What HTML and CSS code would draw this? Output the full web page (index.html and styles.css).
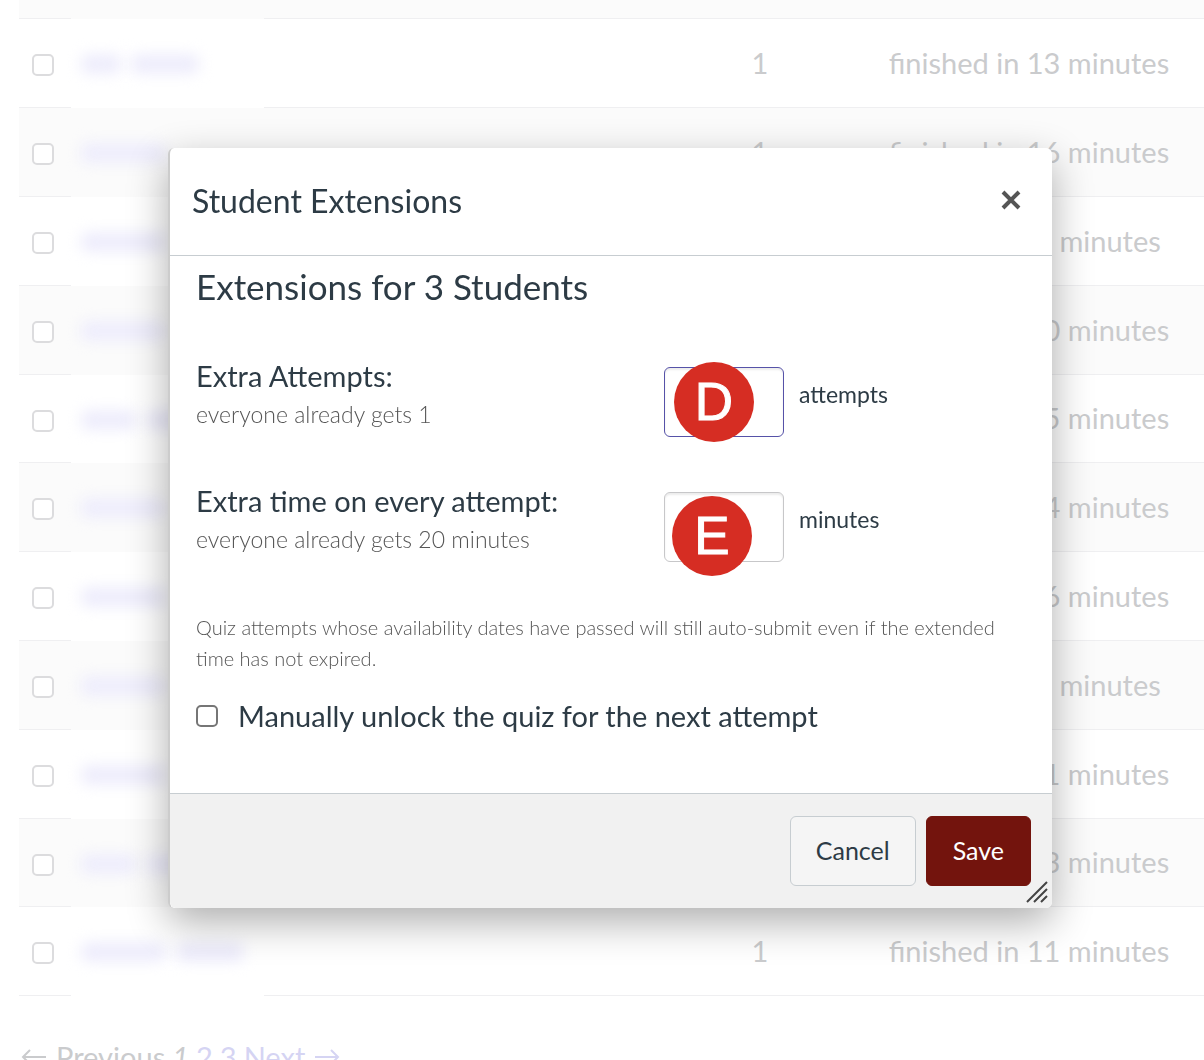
FILE: index.html
```html
<!DOCTYPE html>
<html lang="en">
<head>
<meta charset="utf-8">
<title>Student Extensions</title>
<link rel="stylesheet" href="styles.css">
</head>
<body>
<main class="page">
  <table class="students">
    <colgroup><col class="col-check"><col class="col-name"><col><col class="col-attempt"><col class="col-status"></colgroup>
    <tbody>
      <tr class="partial"><td></td><td></td><td></td><td></td><td></td></tr>
      <tr><td><input class="check" type="checkbox" aria-label="Select student"></td><td class="name"><i class="w40"></i><i class="w70"></i></td><td></td><td>1</td><td>finished in 13 minutes</td></tr>
      <tr><td><input class="check" type="checkbox" aria-label="Select student"></td><td class="name"><i class="w85"></i></td><td></td><td>1</td><td>finished in 16 minutes</td></tr>
      <tr><td><input class="check" type="checkbox" aria-label="Select student"></td><td class="name"><i class="w85"></i></td><td></td><td>1</td><td>finished in 9 minutes</td></tr>
      <tr><td><input class="check" type="checkbox" aria-label="Select student"></td><td class="name"><i class="w85"></i></td><td></td><td>1</td><td>finished in 10 minutes</td></tr>
      <tr><td><input class="check" type="checkbox" aria-label="Select student"></td><td class="name"><i class="w55"></i><i class="w40"></i></td><td></td><td>1</td><td>finished in 15 minutes</td></tr>
      <tr><td><input class="check" type="checkbox" aria-label="Select student"></td><td class="name"><i class="w85"></i></td><td></td><td>1</td><td>finished in 14 minutes</td></tr>
      <tr><td><input class="check" type="checkbox" aria-label="Select student"></td><td class="name"><i class="w85"></i></td><td></td><td>1</td><td>finished in 16 minutes</td></tr>
      <tr><td><input class="check" type="checkbox" aria-label="Select student"></td><td class="name"><i class="w85"></i></td><td></td><td>1</td><td>finished in 9 minutes</td></tr>
      <tr><td><input class="check" type="checkbox" aria-label="Select student"></td><td class="name"><i class="w85"></i></td><td></td><td>1</td><td>finished in 11 minutes</td></tr>
      <tr><td><input class="check" type="checkbox" aria-label="Select student"></td><td class="name"><i class="w55"></i><i class="w40"></i></td><td></td><td>1</td><td>finished in 13 minutes</td></tr>
      <tr><td><input class="check" type="checkbox" aria-label="Select student"></td><td class="name"><i class="w85"></i><i class="w70"></i></td><td></td><td>1</td><td>finished in 11 minutes</td></tr>
    </tbody>
  </table>
  <nav class="pages" aria-label="Pages">
    <span class="step"><svg class="arrow" viewBox="0 0 26 20" aria-hidden="true"><path d="M25 10H2M9 3L2 10l7 7"/></svg>Previous</span>
    <em>1</em>
    <a href="#">2</a>
    <a href="#">3</a>
    <a class="step" href="#">Next<svg class="arrow" viewBox="0 0 26 20" aria-hidden="true"><path d="M1 10h23M17 3l7 7-7 7"/></svg></a>
  </nav>
</main>

<div class="overlay">
  <form class="dialog" role="dialog" aria-labelledby="dialog-title">
    <header class="dialog-head">
      <h1 id="dialog-title">Student Extensions</h1>
      <button class="close" type="button" aria-label="Close"><svg viewBox="0 0 20 20" aria-hidden="true"><path d="M2 2l16 16M18 2L2 18"/></svg></button>
    </header>
    <div class="dialog-body">
      <h2>Extensions for 3 Students</h2>
      <div class="fields">
        <div class="field">
          <div class="caption"><label for="attempts">Extra Attempts:</label><p>everyone already gets 1</p></div>
          <div class="entry"><input class="box active" id="attempts" type="text"><span class="badge badge-d">D</span></div>
          <span class="unit">attempts</span>
        </div>
        <div class="field">
          <div class="caption"><label for="time">Extra time on every attempt:</label><p>everyone already gets 20 minutes</p></div>
          <div class="entry"><input class="box" id="time" type="text"><span class="badge badge-e">E</span></div>
          <span class="unit">minutes</span>
        </div>
      </div>
      <p class="note">Quiz attempts whose availability dates have passed will still auto-submit even if the extended time has not expired.</p>
      <div class="unlock"><input class="check" id="unlock" type="checkbox"><label for="unlock">Manually unlock the quiz for the next attempt</label></div>
    </div>
    <footer class="dialog-foot">
      <button class="btn" type="button">Cancel</button>
      <button class="btn primary" type="submit">Save</button>
      <svg class="grip" viewBox="0 0 22 22" aria-hidden="true"><path d="M1 21L21 1M8 21L21 8M15 21l6-6"/></svg>
    </footer>
  </form>
</div>
</body>
</html>
```
FILE: styles.css
```css
* { box-sizing: border-box; }

body {
  margin: 0;
  height: 100vh;
  overflow: hidden;
  background: #fff;
  color: #2d3b45;
  font-family: Lato, "Liberation Sans", sans-serif;
  font-size: 29px;
}

h1, h2, p { margin: 0; font-weight: 400; }
button, input { font: inherit; color: inherit; }

/* Student list behind the dialog */
.page { padding-left: 19px; color: #cacbcd; }

.students {
  width: 100%;
  table-layout: fixed;
  border-collapse: separate;
  border-spacing: 0;
}
.col-check { width: 52px; }
.col-name { width: 193px; }
.col-attempt { width: 188px; }
.col-status { width: 350px; }

.students td {
  height: 89px;
  padding: 0 0 2px;
  border-bottom: 1px solid #efeff1;
  text-align: center;
}
.students tr:nth-child(5n+1) td { height: 88px; }
.students tr.partial:first-child td { height: 19px; }
.students tr:nth-child(odd) td { background: #fbfbfb; }
.students td:first-child { padding-left: 13px; text-align: left; }
.students td:nth-child(2) { border-bottom-color: transparent; }
.students .name { padding: 0 0 6px 10px; text-align: left; white-space: nowrap; }
.students .check { margin-top: 6px; border-color: #dcdcde; }

/* Names are obscured for privacy */
.name i {
  display: inline-block;
  height: 20px;
  margin-right: 10px;
  border-radius: 6px;
  background: #eeedfc;
  filter: blur(7px);
  vertical-align: middle;
}
.w40 { width: 40px; }
.w55 { width: 55px; }
.w70 { width: 68px; }
.w85 { width: 85px; }

.check {
  appearance: none;
  display: block;
  width: 22px;
  height: 22px;
  margin: 0;
  border: 2px solid #767676;
  border-radius: 5px;
  background: #fff;
}

.pages {
  display: flex;
  align-items: center;
  gap: 7px;
  padding: 43px 0 0 2px;
  line-height: 36px;
}
.pages a { color: #d5d4f3; text-decoration: none; }
.step { display: flex; align-items: center; gap: 9px; }
.arrow { width: 26px; height: 20px; fill: none; stroke: currentColor; stroke-width: 2; }

/* Dialog */
.overlay { position: fixed; inset: 0; padding: 148px 152px 0 168px; }

.dialog {
  border-left: 2px solid #ccc;
  border-radius: 6px;
  background: #fff;
  box-shadow: 0 14px 40px rgba(0, 0, 0, .32);
}

.dialog-head {
  display: flex;
  align-items: center;
  justify-content: space-between;
  padding: 31px 31px 32px 22px;
  border-bottom: 1px solid #c7cdd1;
}
h1 { font-size: 32px; line-height: 44px; }
.close { padding: 0 0 2px; border: 0; background: none; }
.close svg { display: block; width: 20px; height: 20px; stroke: #555; stroke-width: 4; }

.dialog-body { padding: 8px 26px 55px; }
h2 { font-size: 35px; line-height: 44px; }

.fields { display: grid; gap: 45px; margin-top: 49px; }
.field { display: grid; grid-template-columns: 468px 120px 1fr; align-items: start; }
.caption { line-height: 38px; }
.caption label { display: block; }
.caption p { font-size: 23px; font-weight: 300; color: #555; }

.entry { position: relative; margin-top: 10px; }
.box {
  display: block;
  width: 100%;
  height: 70px;
  padding: 0 12px;
  border: 1px solid #c7c7c9;
  border-radius: 6px;
  background: #fff;
  box-shadow: inset 0 2px 2px rgba(0, 0, 0, .08);
}
.box.active { border-color: #5652a8; }
.unit { padding: 18px 0 0 15px; font-size: 23px; line-height: 38px; }

/* Callout markers over the fields */
.badge {
  position: absolute;
  width: 80px;
  height: 80px;
  border-radius: 50%;
  background: #d62d23;
  color: #fff;
  font-family: "Liberation Sans", Arial, sans-serif;
  font-size: 53px;
  line-height: 80px;
  text-align: center;
  -webkit-text-stroke: 1px #fff;
}
.badge-d { left: 10px; top: -5px; }
.badge-e { left: 8px; top: 4px; }

.note { margin-top: 50px; font-size: 20px; line-height: 31px; font-weight: 300; color: #555; }

.unlock { display: flex; align-items: center; gap: 20px; margin-top: 20px; line-height: 44px; }

.dialog-foot {
  position: relative;
  display: flex;
  justify-content: flex-end;
  gap: 10px;
  padding: 22px 21px;
  border-top: 1px solid #c7cdd1;
  border-radius: 0 0 6px 6px;
  background: #f1f1f1;
}
.btn {
  height: 70px;
  padding: 0 25px 2px;
  border: 1px solid #c7cdd1;
  border-radius: 6px;
  background: #f5f5f5;
  font-size: 25px;
}
.btn.primary { padding: 0 26px 2px; border-color: #73140d; background: #73140d; color: #fff; }
.grip { position: absolute; right: 4px; bottom: 5px; width: 22px; height: 22px; fill: none; stroke: #444; stroke-width: 2; }
```
